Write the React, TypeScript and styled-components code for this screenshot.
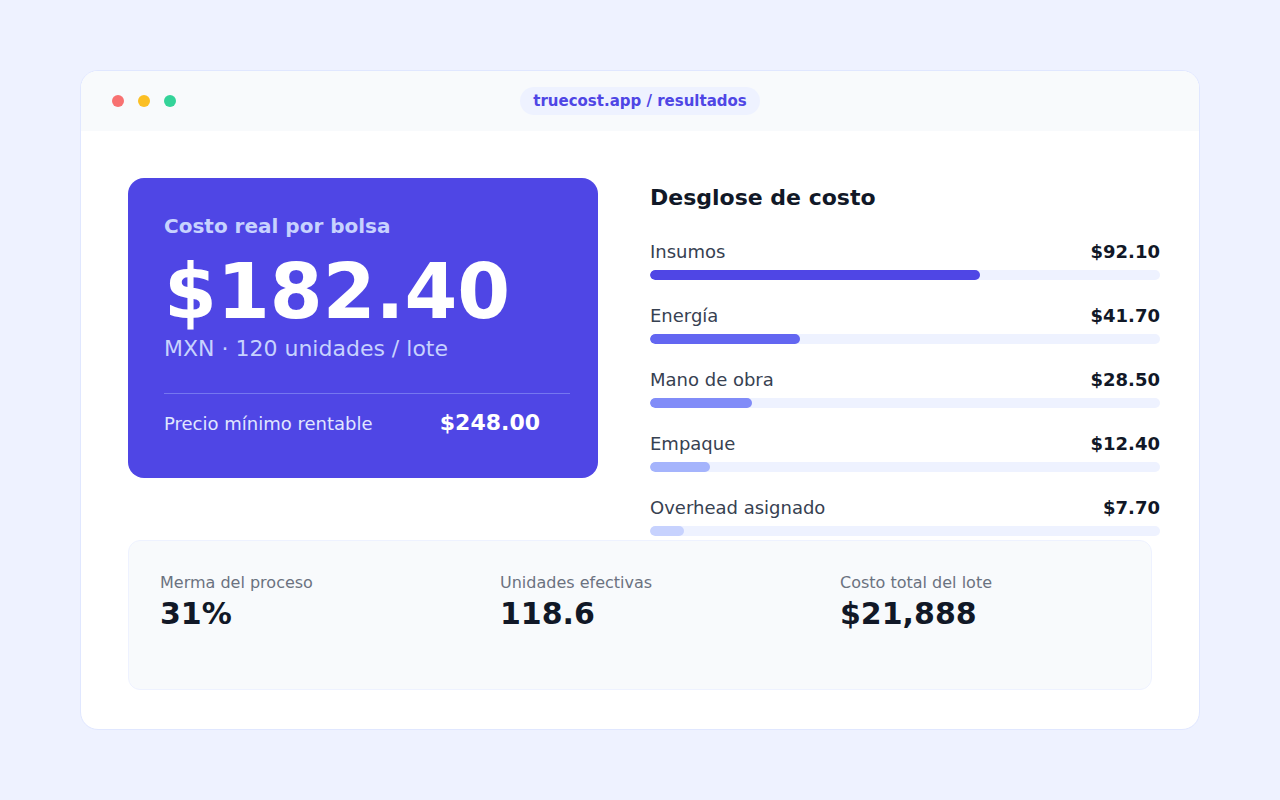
import React from 'react'
import styled, { createGlobalStyle } from 'styled-components'

const GlobalStyle = createGlobalStyle`
  html, body {
    margin: 0;
    padding: 0;
    background: #eef2ff;
    font-family: 'DejaVu Sans', 'Liberation Sans', sans-serif;
  }
  * {
    box-sizing: border-box;
  }
`

const Page = styled.div`
  min-height: 100vh;
  display: flex;
  align-items: center;
  justify-content: center;
`

const Window = styled.div`
  width: 1120px;
  height: 660px;
  background: #ffffff;
  border: 1px solid #e0e7ff;
  border-radius: 18px;
  overflow: hidden;
  display: flex;
  flex-direction: column;
`

const TitleBar = styled.div`
  height: 60px;
  flex-shrink: 0;
  background: #f8fafc;
  display: grid;
  grid-template-columns: 1fr auto 1fr;
  align-items: center;
  padding: 0 31px;
`

const Dots = styled.div`
  display: flex;
  gap: 14px;
`

const Dot = styled.span<{ $color: string }>`
  width: 12px;
  height: 12px;
  border-radius: 50%;
  background: ${(p) => p.$color};
`

const UrlPill = styled.div`
  height: 28px;
  padding: 0 13px;
  border-radius: 14px;
  background: #eef2ff;
  color: #4f46e5;
  font-size: 15px;
  font-weight: 700;
  display: flex;
  align-items: center;
`

const Content = styled.div`
  flex: 1;
  padding: 47px 47px 39px;
  display: flex;
  flex-direction: column;
`

const Top = styled.div`
  display: grid;
  grid-template-columns: 470px 510px;
  column-gap: 52px;
  align-items: start;
`

const PriceCard = styled.div`
  height: 300px;
  background: #4f46e5;
  border-radius: 16px;
  padding: 36px 28px 36px 36px;
  display: flex;
  flex-direction: column;
`

const CardLabel = styled.div`
  font-size: 20px;
  font-weight: 700;
  color: #c7d2fe;
`

const BigPrice = styled.div`
  margin-top: 16px;
  font-size: 76px;
  line-height: 1;
  font-weight: 700;
  color: #ffffff;
`

const Sub = styled.div`
  margin-top: 6px;
  font-size: 22px;
  color: #c7d2fe;
`

const Divider = styled.div`
  margin-top: 32px;
  height: 1px;
  background: rgba(165, 180, 252, 0.45);
`

const MinRow = styled.div`
  padding-top: 16px;
  padding-right: 30px;
  display: flex;
  justify-content: space-between;
  align-items: baseline;
`

const MinLabel = styled.span`
  font-size: 18px;
  color: #e0e7ff;
`

const MinValue = styled.span`
  font-size: 22px;
  font-weight: 700;
  color: #ffffff;
`

const Breakdown = styled.div`
  padding-top: 7px;
  display: flex;
  flex-direction: column;
`

const Heading = styled.h2`
  margin: 0 0 31px;
  font-size: 22px;
  font-weight: 700;
  color: #111827;
`

const Rows = styled.div`
  display: flex;
  flex-direction: column;
  gap: 25px;
`

const Row = styled.div`
  display: flex;
  flex-direction: column;
  gap: 8px;
`

const RowHead = styled.div`
  display: flex;
  justify-content: space-between;
  align-items: baseline;
  font-size: 18px;
`

const RowLabel = styled.span`
  color: #374151;
`

const RowValue = styled.span`
  font-weight: 700;
  color: #111827;
`

const Track = styled.div`
  height: 10px;
  border-radius: 5px;
  background: #eef2ff;
  overflow: hidden;
`

const Fill = styled.div<{ $color: string }>`
  height: 100%;
  border-radius: 5px;
  background: ${(p) => p.$color};
`

const Stats = styled.div`
  margin-top: 4px;
  height: 150px;
  width: 1024px;
  background: #f8fafc;
  border: 1px solid #eef2ff;
  border-radius: 12px;
  padding: 32px 31px;
  display: grid;
  grid-template-columns: repeat(3, 320px);
  column-gap: 20px;
  align-content: start;
`

const Stat = styled.div`
  display: flex;
  flex-direction: column;
  gap: 4px;
`

const StatLabel = styled.div`
  font-size: 16px;
  color: #6b7280;
`

const StatValue = styled.div`
  font-size: 30px;
  font-weight: 700;
  color: #111827;
`

const items = [
  { label: 'Insumos', value: '$92.10', pct: 64.7, color: '#4f46e5' },
  { label: 'Energía', value: '$41.70', pct: 29.4, color: '#6366f1' },
  { label: 'Mano de obra', value: '$28.50', pct: 20, color: '#818cf8' },
  { label: 'Empaque', value: '$12.40', pct: 11.8, color: '#a5b4fc' },
  { label: 'Overhead asignado', value: '$7.70', pct: 6.7, color: '#c7d2fe' },
]

const stats = [
  { label: 'Merma del proceso', value: '31%' },
  { label: 'Unidades efectivas', value: '118.6' },
  { label: 'Costo total del lote', value: '$21,888' },
]

export default function App() {
  return (
    <>
      <GlobalStyle />
      <Page>
        <Window>
          <TitleBar>
            <Dots>
              <Dot $color="#f87171" />
              <Dot $color="#fbbf24" />
              <Dot $color="#34d399" />
            </Dots>
            <UrlPill>truecost.app / resultados</UrlPill>
            <span />
          </TitleBar>
          <Content>
            <Top>
              <PriceCard>
                <CardLabel>Costo real por bolsa</CardLabel>
                <BigPrice>$182.40</BigPrice>
                <Sub>MXN · 120 unidades / lote</Sub>
                <Divider />
                <MinRow>
                  <MinLabel>Precio mínimo rentable</MinLabel>
                  <MinValue>$248.00</MinValue>
                </MinRow>
              </PriceCard>
              <Breakdown>
                <Heading>Desglose de costo</Heading>
                <Rows>
                  {items.map((it) => (
                    <Row key={it.label}>
                      <RowHead>
                        <RowLabel>{it.label}</RowLabel>
                        <RowValue>{it.value}</RowValue>
                      </RowHead>
                      <Track>
                        <Fill $color={it.color} style={{ width: `${it.pct}%` }} />
                      </Track>
                    </Row>
                  ))}
                </Rows>
              </Breakdown>
            </Top>
            <Stats>
              {stats.map((s) => (
                <Stat key={s.label}>
                  <StatLabel>{s.label}</StatLabel>
                  <StatValue>{s.value}</StatValue>
                </Stat>
              ))}
            </Stats>
          </Content>
        </Window>
      </Page>
    </>
  )
}
